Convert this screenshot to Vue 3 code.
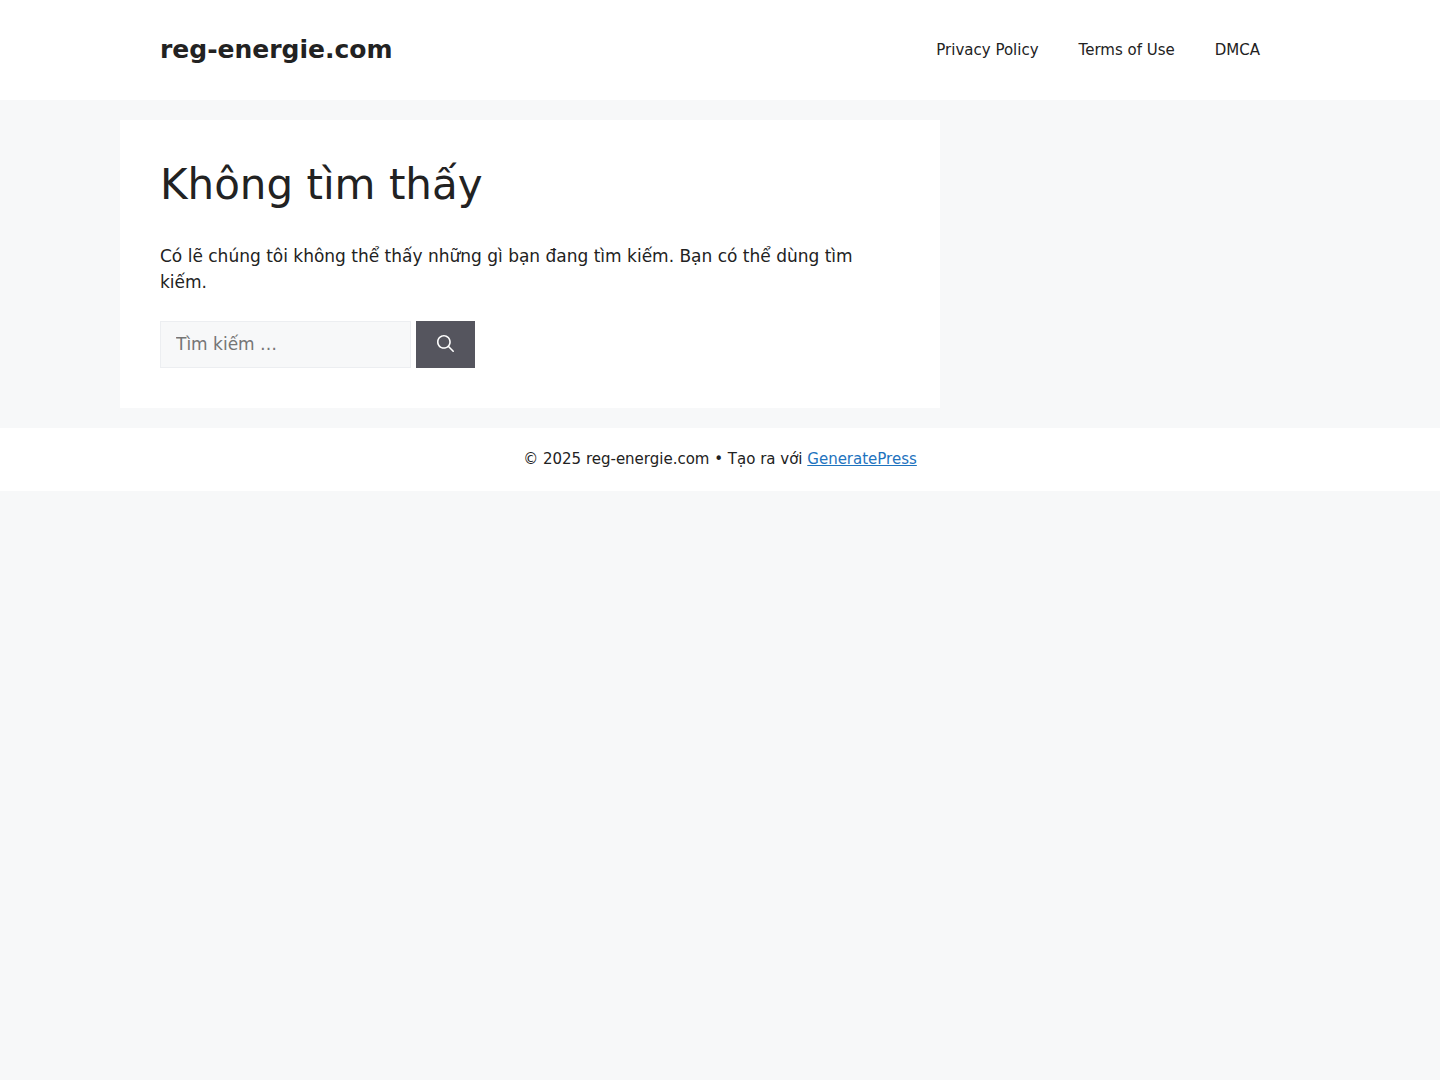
<script setup>
const links = ['Privacy Policy', 'Terms of Use', 'DMCA']
</script>

<template>
  <header class="site-header">
    <div class="inside-header">
      <a class="site-title" href="#">reg-energie.com</a>
      <nav class="main-nav">
        <a v-for="link in links" :key="link" href="#">{{ link }}</a>
      </nav>
    </div>
  </header>

  <div class="site-content">
    <main class="inside-article">
      <h1>Không tìm thấy</h1>
      <p>Có lẽ chúng tôi không thể thấy những gì bạn đang tìm kiếm. Bạn có thể dùng tìm kiếm.</p>
      <form class="search-form" @submit.prevent>
        <input type="search" placeholder="Tìm kiếm …" aria-label="Tìm kiếm" />
        <button type="submit" aria-label="Tìm kiếm">
          <svg viewBox="0 0 512 512" width="17" height="17" aria-hidden="true">
            <path fill="currentColor" fill-rule="evenodd" clip-rule="evenodd" d="M208 48c-88.366 0-160 71.634-160 160s71.634 160 160 160 160-71.634 160-160S296.366 48 208 48zM0 208C0 93.125 93.125 0 208 0s208 93.125 208 208c0 48.741-16.765 93.566-44.843 129.024l133.826 134.018c9.366 9.379 9.355 24.575-.025 33.941-9.379 9.366-24.575 9.355-33.941-.025L337.238 370.987C301.747 399.167 256.839 416 208 416 93.125 416 0 322.875 0 208z" />
          </svg>
        </button>
      </form>
    </main>
  </div>

  <footer class="site-info">
    © 2025 reg-energie.com • Tạo ra với <a href="#">GeneratePress</a>
  </footer>
</template>

<style>
body {
  margin: 0;
  background: #f7f8f9;
  color: #222222;
  font: 17px/26px "DejaVu Sans", sans-serif;
}
</style>

<style scoped>
.site-header,
.site-info {
  background: #ffffff;
}

.inside-header {
  box-sizing: border-box;
  max-width: 1200px;
  min-height: 100px;
  margin: 0 auto;
  padding: 20px 40px;
  display: flex;
  align-items: center;
  justify-content: space-between;
}

.site-title {
  color: #222222;
  font-size: 25px;
  font-weight: 700;
  line-height: 30px;
  text-decoration: none;
}

.main-nav {
  display: flex;
  gap: 40px;
  padding-right: 20px;
}

.main-nav a {
  color: #222222;
  font-size: 15px;
  line-height: 60px;
  text-decoration: none;
}

.site-content {
  max-width: 1200px;
  margin: 0 auto;
  padding: 20px 0;
}

.inside-article {
  box-sizing: border-box;
  width: 100%;
  max-width: 820px;
  padding: 40px;
  background: #ffffff;
}

h1 {
  margin: 0 0 33px;
  font-size: 42px;
  font-weight: 400;
  line-height: 50px;
}

p {
  margin: 0 0 26px;
}

.search-form {
  display: flex;
  gap: 5px;
}

.search-form input {
  box-sizing: border-box;
  width: 251px;
  height: 47px;
  padding: 9px 15px 11px;
  border: 1px solid #eceef1;
  border-radius: 0;
  background: #f7f8f9;
  color: #222222;
  font: inherit;
  appearance: none;
}

.search-form input::placeholder {
  color: #757575;
}

.search-form button {
  display: flex;
  align-items: center;
  padding: 0 21px 2px;
  border: 0;
  background: #55555e;
  color: #ffffff;
  cursor: pointer;
}

.site-info {
  padding: 20px 40px;
  font-size: 15px;
  line-height: 23px;
  text-align: center;
}

.site-info a {
  color: #1e73be;
}
</style>
